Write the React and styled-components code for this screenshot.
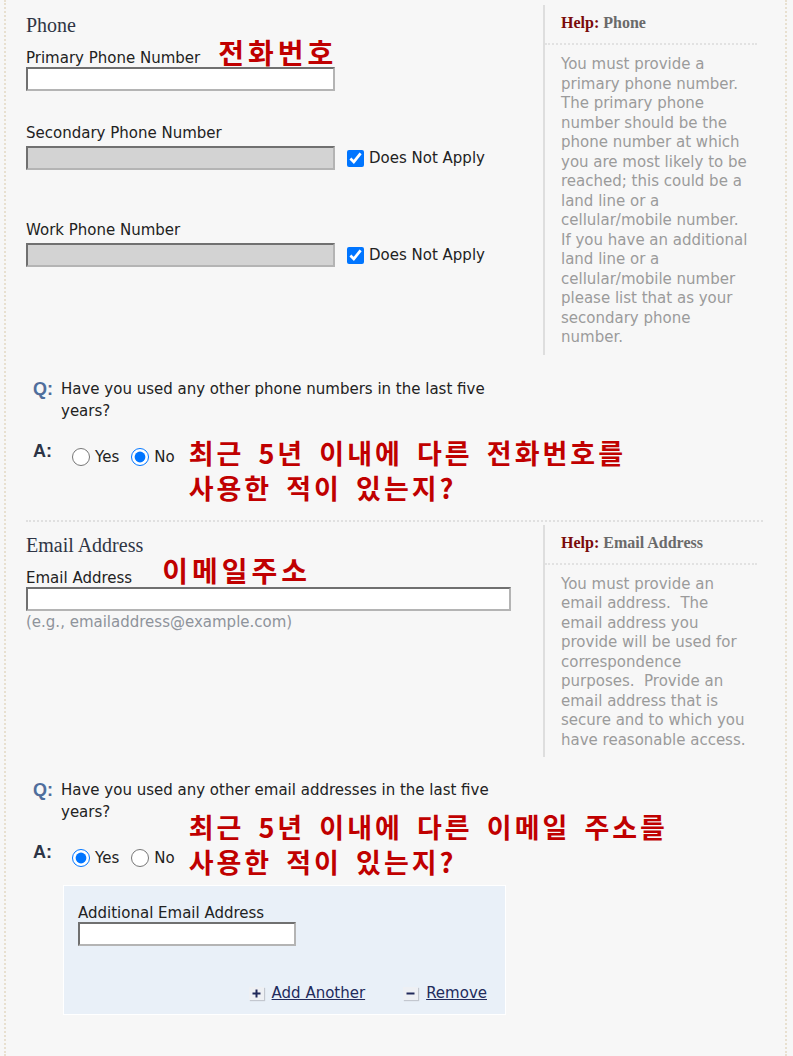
import React from "react";
import styled, { createGlobalStyle } from "styled-components";

const GlobalStyle = createGlobalStyle`
  body {
    margin: 0;
    background: #f7f7f7;
    font-family: "DejaVu Sans", Verdana, sans-serif;
    font-size: 15px;
    color: #222;
  }
`;

const Page = styled.div`
  margin-left: 4px;
  width: 783px;
  min-height: 1056px;
  box-sizing: border-box;
  border-left: 2px dotted #e8e0d0;
  border-right: 2px dotted #e8e0d0;
  padding: 0 22px 0 20px;
`;

const Section = styled.section`
  display: grid;
  grid-template-columns: 517px 214px;
  padding-top: ${p => p.$top || 5}px;
`;

const Main = styled.div`
  padding-top: 8px;
`;

const Heading = styled.h2`
  margin: 0;
  font-family: "Liberation Serif", "Times New Roman", serif;
  font-weight: normal;
  font-size: 20px;
  line-height: 24px;
  color: #2f3545;
`;

const LabelRow = styled.div`
  display: flex;
  align-items: flex-end;
  height: 30px;
`;

const Label = styled.label`
  display: block;
  line-height: 18px;
  color: #222;
`;

const Annotation = styled.span`
  font-family: "Noto Sans CJK KR", sans-serif;
  font-weight: bold;
  font-size: ${p => p.$size || 27}px;
  line-height: ${p => p.$line || 35}px;
  letter-spacing: ${p => p.$spacing ?? 3}px;
  word-spacing: 5px;
  color: #c00000;
  margin-left: ${p => p.$left || 0}px;
  margin-top: ${p => (p.$raise ? -p.$raise : 0)}px;
  margin-bottom: ${p => p.$bottom || 0}px;
`;

const Field = styled.div`
  margin-top: ${p => p.$gap || 0}px;
  ${Label} {
    margin-bottom: ${p => p.$labelGap ?? 4}px;
  }
`;

const TextInput = styled.input`
  display: block;
  box-sizing: border-box;
  width: ${p => p.$width}px;
  height: 24px;
  margin: 0;
  border-style: solid;
  border-width: 2px;
  border-color: #707070 #b4b4b4 #b4b4b4 #707070;
  background: ${p => (p.disabled ? "#d3d3d3" : "#fff")};
  font-family: inherit;
  font-size: 14px;
`;

const InputRow = styled.div`
  display: flex;
  align-items: center;
`;

const Check = styled.input`
  width: 17px;
  height: 17px;
  margin: 0 5px 0 12px;
  accent-color: #0075ff;
`;

const Hint = styled.div`
  margin-top: 2px;
  line-height: 18px;
  color: #8e939b;
`;

const Help = styled.aside`
  border-left: 2px solid #dedede;
  padding-bottom: 7px;
`;

const HelpTitle = styled.div`
  padding: 8px 0 10px 16px;
  border-bottom: 2px dotted #e2e2e2;
  font-family: "Liberation Serif", "Times New Roman", serif;
  font-weight: bold;
  font-size: 16px;
  line-height: 20px;
  color: #6a6a6a;

  b {
    color: #7a0a0a;
  }
`;

const HelpText = styled.p`
  margin: 0;
  padding: 10px 8px 0 16px;
  line-height: 19.5px;
  color: #9b9b9b;
`;

const QRow = styled.div`
  display: flex;
  padding-left: 7px;
  margin-top: ${p => p.$gap}px;
`;

const Mark = styled.span`
  flex: none;
  width: 28px;
  font-family: "Liberation Sans", Arial, sans-serif;
  font-weight: bold;
  font-size: 18px;
  line-height: ${p => p.$line}px;
  color: ${p => p.$color};
`;

const QText = styled.div`
  max-width: 470px;
  line-height: 22px;
  color: #222;
`;

const ARow = styled.div`
  display: flex;
  align-items: flex-start;
  padding-left: 7px;
  margin-top: 16px;
`;

const Radios = styled.div`
  display: flex;
  align-items: center;
  margin: 10px 0 0 11px;
`;

const RadioLabel = styled.label`
  display: flex;
  align-items: center;
  margin-right: 12px;
  line-height: 18px;
  &:last-child {
    margin-right: 0;
  }
`;

const Radio = styled.input`
  width: 18px;
  height: 18px;
  margin: 0 5px 0 0;
  accent-color: #0075ff;
`;

const Divider = styled.hr`
  margin: 15px 0 0;
  border: 0;
  border-top: 2px dotted #e0e0e0;
  width: 737px;
`;

const AddBox = styled.div`
  width: 443px;
  box-sizing: border-box;
  margin: 6px 0 0 37px;
  padding: 18px 18px 12px 14px;
  background: #e9f0f8;
  border: 1px solid #fff;
`;

const LinkRow = styled.div`
  display: flex;
  justify-content: flex-end;
  gap: 38px;
  margin-top: 38px;
`;

const Action = styled.a`
  display: flex;
  align-items: center;
  gap: 8px;
  line-height: 18px;
  color: #222b5c;
  text-decoration: underline;
  cursor: pointer;
`;

const IconBox = styled.span`
  display: inline-flex;
  width: 15px;
  height: 13px;
  background: #eef0f4;
  box-shadow: 1px 1px 1px #c3c7cf;
  align-items: center;
  justify-content: center;
`;

function ActionIcon({ minus }) {
  return (
    <IconBox>
      <svg width="9" height="9" viewBox="0 0 9 9">
        <rect x="0.5" y="3.5" width="8" height="2" fill="#20295a" />
        {!minus && <rect x="3.5" y="0.5" width="2" height="8" fill="#20295a" />}
      </svg>
    </IconBox>
  );
}

function PhoneField({ label, gap }) {
  return (
    <Field $gap={gap}>
      <Label>{label}</Label>
      <InputRow>
        <TextInput $width={309} disabled />
        <Check type="checkbox" defaultChecked />
        <span>Does Not Apply</span>
      </InputRow>
    </Field>
  );
}

function Question({ children, gap }) {
  return (
    <QRow $gap={gap}>
      <Mark $line={22} $color="#4f6e9c">Q:</Mark>
      <QText>{children}</QText>
    </QRow>
  );
}

function Answer({ name, yes, raise }) {
  return (
    <ARow>
      <Mark $line={26} $color="#2c3446">A:</Mark>
      <Radios>
        <RadioLabel>
          <Radio type="radio" name={name} defaultChecked={yes} />
          Yes
        </RadioLabel>
        <RadioLabel>
          <Radio type="radio" name={name} defaultChecked={!yes} />
          No
        </RadioLabel>
      </Radios>
      <Annotation $left={14} $raise={raise}>
        {yes ? "최근 5년 이내에 다른 이메일 주소를" : "최근 5년 이내에 다른 전화번호를"}
        <br />
        사용한 적이 있는지?
      </Annotation>
    </ARow>
  );
}

export default function App() {
  return (
    <>
      <GlobalStyle />
      <Page>
        <Section>
          <Main>
            <Heading>Phone</Heading>
            <Field $labelGap={0}>
              <LabelRow>
                <Label>Primary Phone Number</Label>
                <Annotation $size={28} $line={30} $left={18} $spacing={4}>전화번호</Annotation>
              </LabelRow>
              <TextInput $width={309} />
            </Field>
            <PhoneField label="Secondary Phone Number" gap={33} />
            <PhoneField label="Work Phone Number" gap={51} />
          </Main>
          <Help>
            <HelpTitle><b>Help:</b> Phone</HelpTitle>
            <HelpText>
              You must provide a primary phone number. The primary phone number should be the
              phone number at which you are most likely to be reached; this could be a land line
              or a cellular/mobile number. If you have an additional land line or a
              cellular/mobile number please list that as your secondary phone number.
            </HelpText>
          </Help>
        </Section>

        <Question gap={23}>Have you used any other phone numbers in the last five years?</Question>
        <Answer name="otherPhone" raise={3} />

        <Divider />

        <Section $top={3}>
          <Main>
            <Heading>Email Address</Heading>
            <Field $labelGap={0}>
              <LabelRow>
                <Label>Email Address</Label>
                <Annotation $size={28} $line={30} $left={30} $spacing={4} $bottom={2}>이메일주소</Annotation>
              </LabelRow>
              <TextInput $width={485} />
              <Hint>(e.g., emailaddress@example.com)</Hint>
            </Field>
          </Main>
          <Help>
            <HelpTitle><b>Help:</b> Email Address</HelpTitle>
            <HelpText>
              You must provide an email address.{"\u00a0 "}The email address you provide will be
              used for correspondence purposes.{"\u00a0 "}Provide an email address that is secure
              and to which you have reasonable access.
            </HelpText>
          </Help>
        </Section>

        <Question gap={22}>Have you used any other email addresses in the last five years?</Question>
        <Answer name="otherEmail" yes raise={30} />

        <AddBox>
          <Field $labelGap={0}>
            <Label>Additional Email Address</Label>
            <TextInput $width={218} />
          </Field>
          <LinkRow>
            <Action>
              <ActionIcon />
              Add Another
            </Action>
            <Action>
              <ActionIcon minus />
              Remove
            </Action>
          </LinkRow>
        </AddBox>
      </Page>
    </>
  );
}
